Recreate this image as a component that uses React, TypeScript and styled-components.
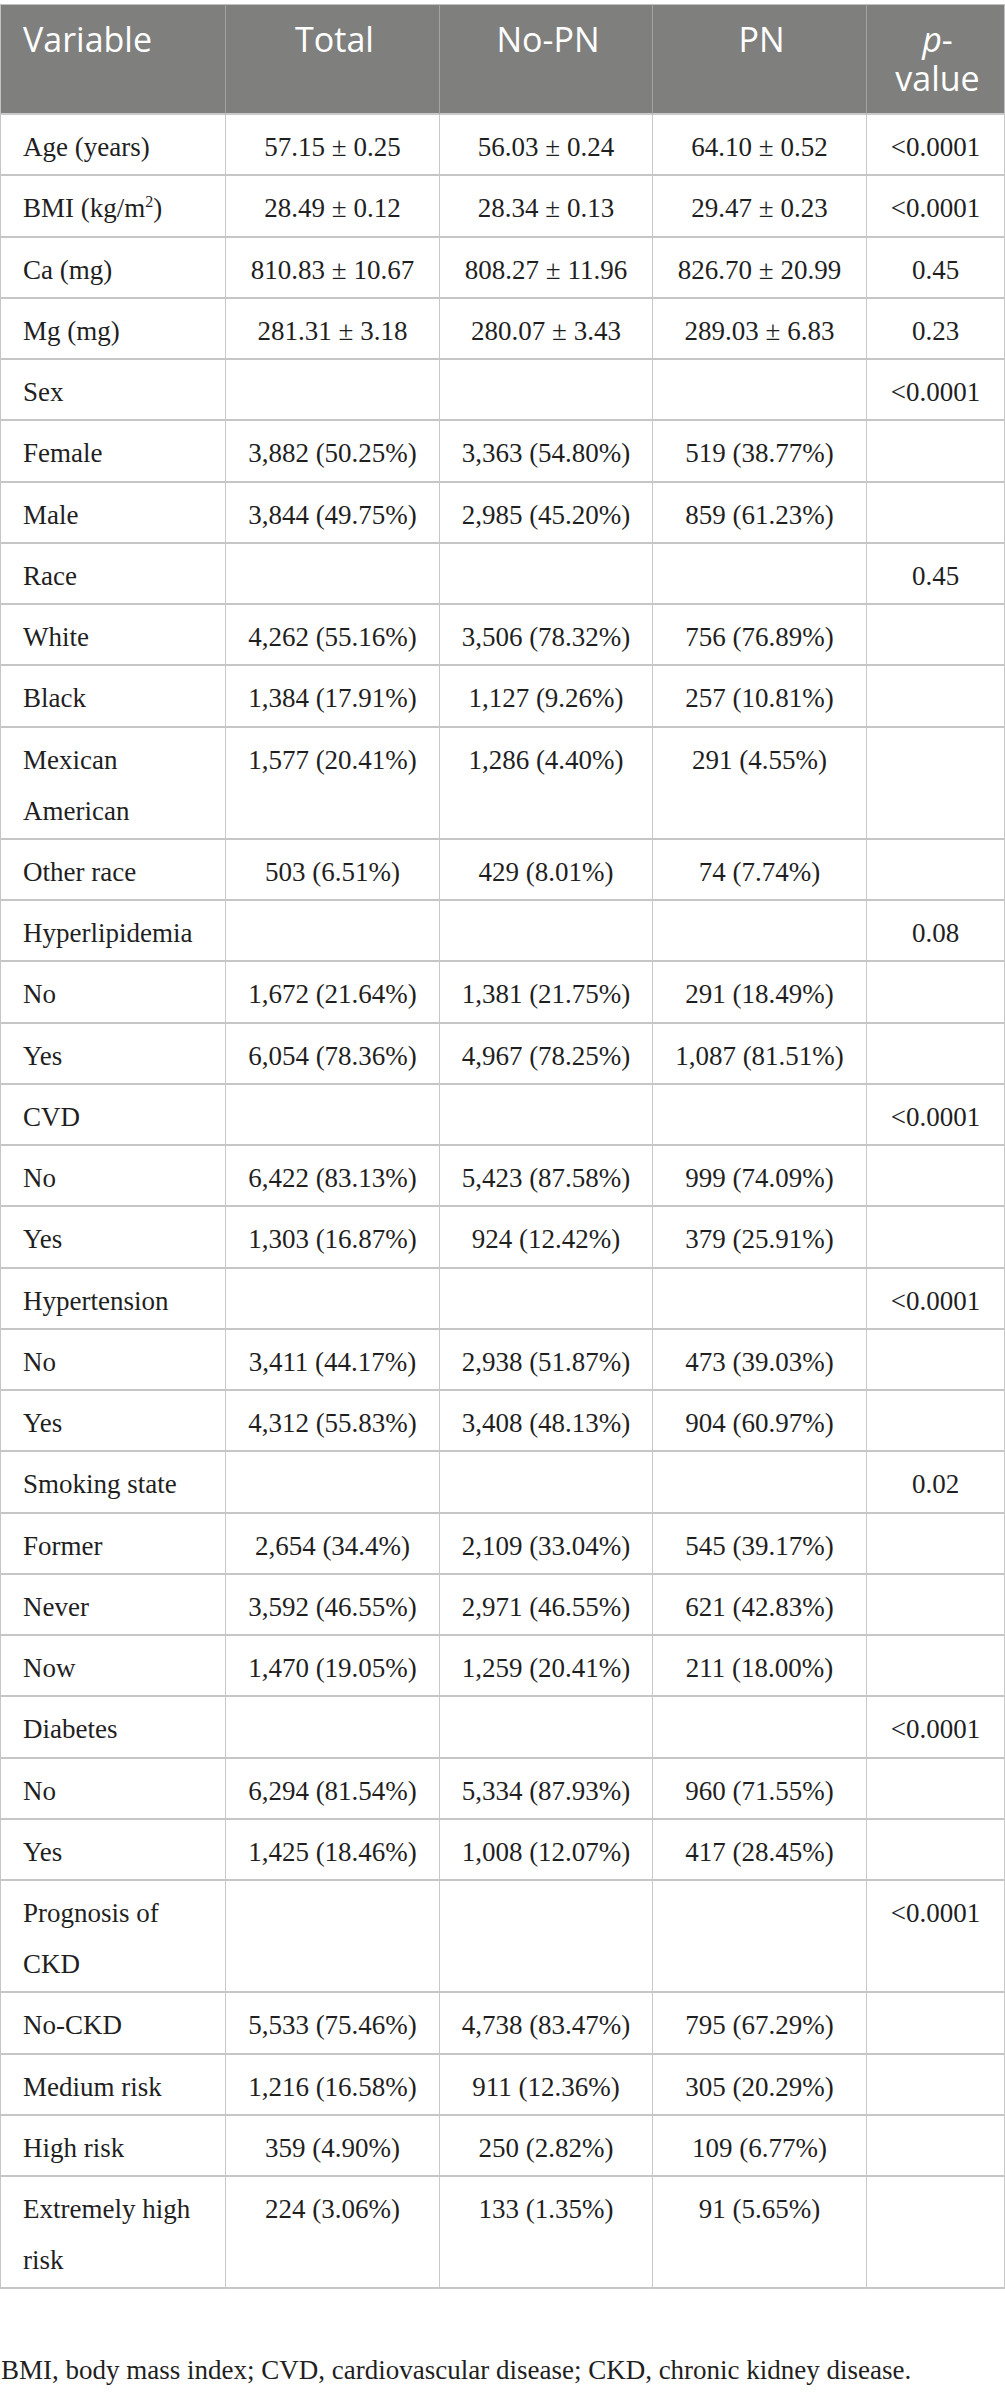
import React from "react";
import styled, { createGlobalStyle } from "styled-components";

type Row = {
  label: React.ReactNode;
  total?: string;
  noPn?: string;
  pn?: string;
  p?: string;
};

const rows: Row[] = [
  { label: "Age (years)", total: "57.15 ± 0.25", noPn: "56.03 ± 0.24", pn: "64.10 ± 0.52", p: "<0.0001" },
  {
    label: (
      <>
        BMI (kg/m<sup>2</sup>)
      </>
    ),
    total: "28.49 ± 0.12",
    noPn: "28.34 ± 0.13",
    pn: "29.47 ± 0.23",
    p: "<0.0001",
  },
  { label: "Ca (mg)", total: "810.83 ± 10.67", noPn: "808.27 ± 11.96", pn: "826.70 ± 20.99", p: "0.45" },
  { label: "Mg (mg)", total: "281.31 ± 3.18", noPn: "280.07 ± 3.43", pn: "289.03 ± 6.83", p: "0.23" },
  { label: "Sex", p: "<0.0001" },
  { label: "Female", total: "3,882 (50.25%)", noPn: "3,363 (54.80%)", pn: "519 (38.77%)" },
  { label: "Male", total: "3,844 (49.75%)", noPn: "2,985 (45.20%)", pn: "859 (61.23%)" },
  { label: "Race", p: "0.45" },
  { label: "White", total: "4,262 (55.16%)", noPn: "3,506 (78.32%)", pn: "756 (76.89%)" },
  { label: "Black", total: "1,384 (17.91%)", noPn: "1,127 (9.26%)", pn: "257 (10.81%)" },
  { label: "Mexican American", total: "1,577 (20.41%)", noPn: "1,286 (4.40%)", pn: "291 (4.55%)" },
  { label: "Other race", total: "503 (6.51%)", noPn: "429 (8.01%)", pn: "74 (7.74%)" },
  { label: "Hyperlipidemia", p: "0.08" },
  { label: "No", total: "1,672 (21.64%)", noPn: "1,381 (21.75%)", pn: "291 (18.49%)" },
  { label: "Yes", total: "6,054 (78.36%)", noPn: "4,967 (78.25%)", pn: "1,087 (81.51%)" },
  { label: "CVD", p: "<0.0001" },
  { label: "No", total: "6,422 (83.13%)", noPn: "5,423 (87.58%)", pn: "999 (74.09%)" },
  { label: "Yes", total: "1,303 (16.87%)", noPn: "924 (12.42%)", pn: "379 (25.91%)" },
  { label: "Hypertension", p: "<0.0001" },
  { label: "No", total: "3,411 (44.17%)", noPn: "2,938 (51.87%)", pn: "473 (39.03%)" },
  { label: "Yes", total: "4,312 (55.83%)", noPn: "3,408 (48.13%)", pn: "904 (60.97%)" },
  { label: "Smoking state", p: "0.02" },
  { label: "Former", total: "2,654 (34.4%)", noPn: "2,109 (33.04%)", pn: "545 (39.17%)" },
  { label: "Never", total: "3,592 (46.55%)", noPn: "2,971 (46.55%)", pn: "621 (42.83%)" },
  { label: "Now", total: "1,470 (19.05%)", noPn: "1,259 (20.41%)", pn: "211 (18.00%)" },
  { label: "Diabetes", p: "<0.0001" },
  { label: "No", total: "6,294 (81.54%)", noPn: "5,334 (87.93%)", pn: "960 (71.55%)" },
  { label: "Yes", total: "1,425 (18.46%)", noPn: "1,008 (12.07%)", pn: "417 (28.45%)" },
  { label: "Prognosis of CKD", p: "<0.0001" },
  { label: "No-CKD", total: "5,533 (75.46%)", noPn: "4,738 (83.47%)", pn: "795 (67.29%)" },
  { label: "Medium risk", total: "1,216 (16.58%)", noPn: "911 (12.36%)", pn: "305 (20.29%)" },
  { label: "High risk", total: "359 (4.90%)", noPn: "250 (2.82%)", pn: "109 (6.77%)" },
  { label: "Extremely high risk", total: "224 (3.06%)", noPn: "133 (1.35%)", pn: "91 (5.65%)" },
];

const App = () => {
  return (
    <Page>
      <GlobalStyle />
      <Table>
        <colgroup>
          <col style={{ width: 226 }} />
          <col style={{ width: 214 }} />
          <col style={{ width: 213 }} />
          <col style={{ width: 214 }} />
          <col style={{ width: 138 }} />
        </colgroup>
        <thead>
          <tr>
            <HeadCell $align="left">Variable</HeadCell>
            <HeadCell>Total</HeadCell>
            <HeadCell>No-PN</HeadCell>
            <HeadCell>PN</HeadCell>
            <HeadCell $last>
              <em>p</em>-value
            </HeadCell>
          </tr>
        </thead>
        <tbody>
          {rows.map((r, i) => (
            <tr key={i}>
              <Cell $align="left">{r.label}</Cell>
              <Cell>{r.total}</Cell>
              <Cell>{r.noPn}</Cell>
              <Cell>{r.pn}</Cell>
              <Cell $last>{r.p}</Cell>
            </tr>
          ))}
        </tbody>
      </Table>
      <Footnote>BMI, body mass index; CVD, cardiovascular disease; CKD, chronic kidney disease.</Footnote>
    </Page>
  );
};

export default App;

const serif = `"Liberation Serif", "Times New Roman", serif`;

const GlobalStyle = createGlobalStyle`
  html, body {
    margin: 0;
    padding: 0;
    background: #ffffff;
  }
`;

const Page = styled.div`
  width: 1005px;
  padding-top: 4px;
  font-family: ${serif};
  color: #1f1f1f;
`;

const Table = styled.table`
  width: 1005px;
  table-layout: fixed;
  border-collapse: separate;
  border-spacing: 0;
  font-family: ${serif};
  font-size: 27px;
  color: #1f1f1f;
`;

const HeadCell = styled.th<{ $align?: string; $last?: boolean }>`
  background: #7f7f7e;
  color: #ffffff;
  font-family: "Open Sans", "DejaVu Sans", sans-serif;
  font-weight: 400;
  font-size: 34px;
  line-height: 39px;
  text-align: ${(p) => p.$align || "center"};
  vertical-align: top;
  padding: 15px 18px 15px 22px;
  border-top: 1px solid #c2c2c2;
  border-bottom: 2px solid #c9c9c9;
  border-right: ${(p) => (p.$last ? "1px solid #c2c2c2" : "1px solid #a3a3a3")};

  &:first-child {
    border-left: 1px solid #c2c2c2;
  }

  em {
    font-style: italic;
  }
`;

const Cell = styled.td<{ $align?: string; $last?: boolean }>`
  font-family: ${serif};
  font-size: 27px;
  text-align: ${(p) => p.$align || "center"};
  vertical-align: top;
  line-height: 51px;
  padding: 7px 8px 1.25px 8px;
  border-bottom: 2px solid #c6c6c6;
  border-right: 1px solid #c9c9c9;
  white-space: nowrap;

  &:first-child {
    border-left: 1px solid #c6c6c6;
    padding-left: 22px;
    padding-right: 12px;
    white-space: normal;
  }

  sup {
    font-size: 16px;
    line-height: 0;
    vertical-align: 10px;
  }
`;

const Footnote = styled.p`
  margin: 65px 0 0 1px;
  font-family: ${serif};
  font-size: 27px;
  line-height: 32px;
  color: #1f1f1f;
`;
